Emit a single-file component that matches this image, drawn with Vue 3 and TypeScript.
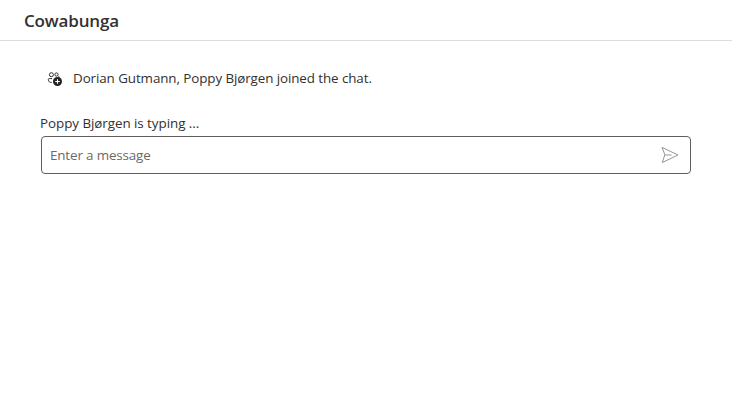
<script setup lang="ts">
import { ref } from 'vue'

const topic = 'Cowabunga'
const notice = 'Dorian Gutmann, Poppy Bjørgen joined the chat.'
const typing = 'Poppy Bjørgen is typing ...'
const message = ref('')
</script>

<template>
  <div class="chat">
    <header class="header"><h1 class="topic">{{ topic }}</h1></header>
    <main class="thread">
      <div class="notice">
        <svg class="people" width="16" height="16" viewBox="0 0 16 16" fill="none" stroke="#323130">
          <circle cx="4.4" cy="3.7" r="2" />
          <circle cx="9.5" cy="3.5" r="1.6" />
          <path d="M5 7.6H2.2Q1.3 7.6 1.3 8.6C1.3 10.5 2.6 11.5 4.7 11.5M11 6C12.1 5.5 12.5 5.8 12.5 6.6" />
          <circle class="badge" cx="10.5" cy="10.5" r="4.5" />
          <path class="plus" d="M10.5 8.2V12.8M8.2 10.5H12.8" />
        </svg>
        <span class="notice-text">{{ notice }}</span>
      </div>
      <div class="typing"><span>{{ typing }}</span></div>
      <div class="sendbox">
        <input v-model="message" class="input" type="text" placeholder="Enter a message" />
        <button class="send" type="button" aria-label="Send">
          <svg width="20" height="20" viewBox="0 0 20 20" fill="none" stroke="#979593" stroke-linejoin="round" stroke-linecap="round">
            <path d="M2.4 2.5L18 10L2.4 17.5L4.7 10ZM4.7 10H11.2" />
          </svg>
        </button>
      </div>
    </main>
  </div>
</template>

<style>
body { margin: 0; background: #fff; }
</style>

<style scoped>
.chat {
  height: 412px;
  color: #323130;
  font-family: "Open Sans", "Noto Sans", sans-serif;
  font-size: 13.4px;
  line-height: 20px;
}
.header {
  box-sizing: border-box;
  height: 41px;
  padding: 8px 24px;
  border-bottom: 1px solid #dcdcdc;
}
.topic { margin: 0; font-size: 17px; line-height: 25px; font-weight: 600; letter-spacing: -0.15px; }
.thread { padding: 27px 41px 0; }
.notice { display: flex; align-items: center; height: 20px; padding-left: 6px; }
.people { flex: none; margin-top: 2px; }
.badge { fill: #242322; stroke: none; }
.plus { stroke: #fff; stroke-width: 1.1; }
.notice-text { margin-left: 10px; white-space: nowrap; letter-spacing: -0.09px; }
.typing { height: 20px; margin: 25px 0 3px -1px; white-space: nowrap; letter-spacing: -0.05px; }
.sendbox {
  box-sizing: border-box;
  display: flex;
  align-items: center;
  height: 38px;
  border: 1px solid #605e5c;
  border-radius: 4px;
  padding: 0 10px 0 8px;
}
.input {
  flex: 1;
  min-width: 0;
  padding: 0;
  border: 0;
  outline: 0;
  background: none;
  color: inherit;
  font: inherit;
  letter-spacing: -0.14px;
}
.input::placeholder { color: #6b6967; opacity: 1; }
.send { display: flex; padding: 0; border: 0; background: none; }
</style>
